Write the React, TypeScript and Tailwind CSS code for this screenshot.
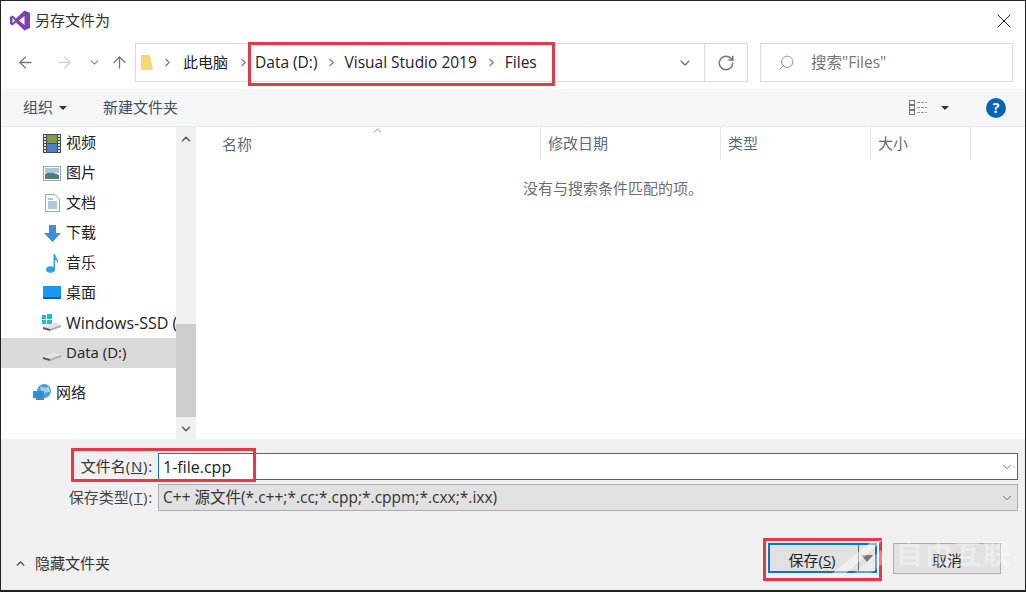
import React from 'react';
import { ArrowLeft, ArrowRight, ArrowUp, ChevronDown, ChevronRight, ChevronUp, RotateCw, X, Search } from 'lucide-react';

const FONT = "[font-family:'Open_Sans','Noto_Sans_CJK_SC',sans-serif]";

const VsLogo = () => (
  <svg width="20" height="21" viewBox="0 0 20 21">
    <path d="M14.5 0.5 L20 3 V18 L14.5 20.5 L6 12.5 L2.5 15.5 L0 14 V7 L2.5 5.5 L6 8.5 Z" fill="#7b3fb8" />
    <path d="M14.5 6 L9 10.5 L14.5 15 Z" fill="#fff" />
    <path d="M2.5 8 V13 L5 10.5 Z" fill="#fff" />
  </svg>
);

const FilmIcon = () => (
  <svg width="18" height="19" viewBox="0 0 18 19">
    <rect width="18" height="19" fill="#4a4a44" />
    <rect x="4" y="1" width="10" height="8" fill="#7f9a4a" />
    <rect x="4" y="10" width="10" height="8" fill="#4f7fd0" />
    {[1, 4, 7, 10, 13, 16].map(y => (
      <g key={y}>
        <rect x="1" y={y} width="2" height="2" fill="#ddd" />
        <rect x="15" y={y} width="2" height="2" fill="#ddd" />
      </g>
    ))}
  </svg>
);

const PictureIcon = () => (
  <svg width="18" height="15" viewBox="0 0 18 15">
    <rect x="0.5" y="0.5" width="17" height="14" fill="#fff" stroke="#9aa5ad" />
    <rect x="2" y="2" width="14" height="5" fill="#a9c6dc" />
    <path d="M2 8 Q8 5 16 9 V13 H2 Z" fill="#4f7f70" />
  </svg>
);

const DocIcon = () => (
  <svg width="15" height="18" viewBox="0 0 15 18">
    <path d="M0.5 0.5 H10 L14.5 5 V17.5 H0.5 Z" fill="#fff" stroke="#9aa5ad" />
    <path d="M3 5 H8 M3 8 H12 M3 10 H12 M3 12 H12 M3 14 H12" stroke="#5b8fc0" />
  </svg>
);

const DownloadIcon = () => (
  <svg width="17" height="17" viewBox="0 0 17 17">
    <path d="M5 0 H12 V8 H17 L8.5 17 L0 8 H5 Z" fill="#3e8ede" />
  </svg>
);

const MusicIcon = () => (
  <svg width="13" height="19" viewBox="0 0 13 19">
    <ellipse cx="4.5" cy="15.5" rx="4.5" ry="3.2" fill="#2ea3ea" />
    <path d="M7.5 15 V0 H9 C9.5 4 13 5 12 10 C11.5 7.5 10.5 6.5 9 6 V15 Z" fill="#2ea3ea" />
  </svg>
);

const DesktopIcon = () => (
  <svg width="18" height="14" viewBox="0 0 18 14">
    <rect width="18" height="12" fill="#1c97f0" />
    <rect y="11" width="18" height="2" fill="#0d5fa8" />
  </svg>
);

const DriveIcon = ({ win }: { win?: boolean }) => (
  <svg width="20" height="18" viewBox="0 0 20 18">
    {win && (
      <g fill="#22b8d8">
        <rect x="0" y="1" width="4" height="4" />
        <rect x="5" y="0" width="5" height="5" />
        <rect x="0" y="6" width="4" height="4" />
        <rect x="5" y="6" width="5" height="4" />
      </g>
    )}
    <path d="M1 13 L13 8 L19 11 L8 15 Z" fill="#e4e4e4" />
    <path d="M1 13 L8 15 V17 L1 15 Z" fill="#55585a" />
    <path d="M8 15 L19 11 V13 L8 17 Z" fill="#a9adb0" />
  </svg>
);

const NetworkIcon = () => (
  <svg width="19" height="18" viewBox="0 0 19 18">
    <circle cx="11" cy="7" r="7" fill="#4fa0cf" />
    <path d="M7 2 Q11 5 16 3 L17 8 Q12 8 9 11 Z" fill="#9fd2ea" />
    <rect x="0" y="7" width="11" height="7" fill="#2b8fdc" />
    <rect x="3" y="14" width="8" height="2" fill="#6d7d8a" />
  </svg>
);

const NavItem = ({ icon, label, indent = 'pl-[41px]', size = 'text-[15px]', active }: { icon: React.ReactNode; label: string; indent?: string; size?: string; active?: boolean }) => (
  <div className={`h-[30px] flex items-center shrink-0 whitespace-nowrap overflow-hidden ${indent} ${active ? 'bg-[#d9d9d9]' : ''}`}>
    <div className="w-[20px] flex justify-center shrink-0">{icon}</div>
    <span className={`ml-[4px] mb-[1px] text-[#222] ${size}`}>{label}</span>
  </div>
);

const Column = ({ label, width }: { label: string; width: string }) => (
  <div className={`h-[33px] flex items-center pl-[7px] border-r border-[#e5e5e5] text-[15px] text-[#5a6b7c] ${width}`}>
    {label}
  </div>
);

const RedBox = ({ className }: { className: string }) => (
  <div className={`absolute border-[3px] border-[#e53945] pointer-events-none ${className}`} />
);

export default function App() {
  return (
    <div className={`relative w-[1026px] h-[592px] overflow-hidden bg-white flex flex-col border-x border-t border-b-2 border-[#222] ${FONT}`}>
      {/* title bar */}
      <div className="h-[39px] shrink-0 flex items-center pl-[9px] pr-[9px]">
        <VsLogo />
        <span className="ml-[5px] text-[15px] text-[#333]">另存文件为</span>
        <X className="ml-auto text-[#222]" size={24} strokeWidth={1} />
      </div>

      {/* address row */}
      <div className="h-[49px] shrink-0 flex pt-[3px] pl-[15px] pr-[12px]">
        <div className="flex items-center h-[39px] text-[#777]">
          <ArrowLeft size={19} strokeWidth={1.6} />
          <ArrowRight size={19} strokeWidth={1.6} className="ml-[20px] text-[#d4d4d4]" />
          <ChevronDown size={13} strokeWidth={2} className="ml-[14px] text-[#888]" />
          <ArrowUp size={19} strokeWidth={1.6} className="ml-[9px]" />
        </div>
        <div className="ml-[6px] w-[613px] h-[39px] flex items-center border border-[#d9d9d9]">
          <svg width="12" height="17" viewBox="0 0 12 17" className="ml-[5px]">
            <path d="M0 1 H9 L12 16 H0 Z" fill="#f7d774" />
          </svg>
          <ChevronRight size={13} strokeWidth={2} className="ml-[8px] text-[#777]" />
          <span className="ml-[9px] text-[15px] text-[#222]">此电脑</span>
          <ChevronRight size={13} strokeWidth={2} className="ml-[9px] text-[#777]" />
          <span className="ml-[5px] text-[15.5px] text-[#222]">Data (D:)</span>
          <ChevronRight size={13} strokeWidth={2} className="ml-[7px] text-[#777]" />
          <span className="ml-[7px] text-[15.5px] text-[#222]">Visual Studio 2019</span>
          <ChevronRight size={13} strokeWidth={2} className="ml-[8px] text-[#777]" />
          <span className="ml-[7px] text-[15.5px] text-[#222]">Files</span>
          <ChevronDown size={16} strokeWidth={1.6} className="ml-auto mr-[11px] text-[#666]" />
          <div className="w-[43px] h-full border-l border-[#d9d9d9] flex items-center justify-center">
            <RotateCw size={18} strokeWidth={2} className="text-[#777]" />
          </div>
        </div>
        <div className="ml-[12px] flex-1 h-[39px] flex items-center border border-[#d9d9d9] pl-[17px] text-[15.5px] text-[#777]">
          <Search size={17} strokeWidth={1.1} className="-scale-x-100 text-[#777]" />
          <span className="ml-[16px]">搜索"Files"</span>
        </div>
      </div>

      {/* toolbar */}
      <div className="h-[38px] shrink-0 bg-[#f5f6f7] flex items-center pl-[22px] pr-[19px] text-[15px] text-[#3f4f60] border-b border-[#e8e8e8]">
        <span>组织</span>
        <span className="ml-[6px] w-0 h-0 border-x-[4px] border-x-transparent border-t-[4px] border-t-[#333]" />
        <span className="ml-[36px]">新建文件夹</span>
        <svg width="18" height="16" viewBox="0 0 18 16" className="ml-auto">
          <rect x="0.5" y="0.5" width="5" height="4" fill="none" stroke="#777" />
          <rect x="0.5" y="5.5" width="5" height="4" fill="none" stroke="#777" />
          <rect x="0.5" y="10.5" width="5" height="4" fill="none" stroke="#777" />
          <path d="M8 2.5 H18 M8 7.5 H18 M8 12.5 H18" stroke="#999" strokeDasharray="3 1" />
        </svg>
        <span className="ml-[14px] w-0 h-0 border-x-[4px] border-x-transparent border-t-[4px] border-t-[#333]" />
        <div className="ml-[37px] w-[20px] h-[20px] rounded-full bg-[#0b63b5] text-white font-bold text-[14px] flex items-center justify-center">?</div>
      </div>

      {/* body */}
      <div className="h-[312px] shrink-0 flex">
        <div className="w-[175px] shrink-0 flex flex-col pt-[1px]">
          <NavItem icon={<FilmIcon />} label="视频" />
          <NavItem icon={<PictureIcon />} label="图片" />
          <NavItem icon={<DocIcon />} label="文档" />
          <NavItem icon={<DownloadIcon />} label="下载" />
          <NavItem icon={<MusicIcon />} label="音乐" />
          <NavItem icon={<DesktopIcon />} label="桌面" />
          <NavItem icon={<DriveIcon win />} label="Windows-SSD (" size="text-[16px]" />
          <NavItem icon={<DriveIcon />} label="Data (D:)" active />
          <div className="h-[10px] shrink-0" />
          <NavItem icon={<NetworkIcon />} label="网络" indent="pl-[31px]" />
        </div>
        <div className="w-[20px] shrink-0 bg-[#f0f0f0] flex flex-col items-center">
          <ChevronUp size={14} strokeWidth={2.4} className="mt-[5px] text-[#555]" />
          <div className="mt-[178px] w-full h-[93px] bg-[#cdcdcd]" />
          <ChevronDown size={14} strokeWidth={2.4} className="mt-[5px] text-[#555]" />
        </div>
        <div className="flex-1 relative">
          <div className="flex">
            <Column label="" width="w-[345px]" />
            <Column label="修改日期" width="w-[180px]" />
            <Column label="类型" width="w-[150px]" />
            <Column label="大小" width="w-[100px]" />
          </div>
          <span className="absolute left-[26px] top-[6px] text-[15px] text-[#5a6b7c]">名称</span>
          <ChevronUp size={13} strokeWidth={1.2} className="absolute left-[175px] top-[-3px] text-[#555]" />
          <div className="pl-[327px] pt-[17px] text-[15px] text-[#6d6d6d]">没有与搜索条件匹配的项。</div>
        </div>
      </div>

      {/* footer */}
      <div className="flex-1 bg-[#f0f0f0] flex flex-col">
        <div className="flex items-center mt-[14px] h-[27px]">
          <div className="w-[157px] text-right pr-[5px] text-[15px] text-[#333]">文件名<span className="tracking-[0.8px]">(<span className="underline">N</span>):</span></div>
          <div className="w-[860px] h-[27px] bg-white border border-[#1a73b8] flex items-center pl-[4px] text-[16px] text-[#222]">
            1-file.cpp
            <ChevronDown size={14} strokeWidth={1.4} className="ml-auto mr-[3px] text-[#555]" />
          </div>
        </div>
        <div className="flex items-center mt-[4px] h-[27px]">
          <div className="w-[157px] text-right pr-[5px] text-[15px] text-[#444]">保存类型<span className="tracking-[0.8px]">(<span className="underline">T</span>):</span></div>
          <div className="w-[860px] h-[27px] bg-[#e1e1e1] border border-[#adadad] flex items-center pl-[4px] text-[15.5px] text-[#333]">
            C++ 源文件(*.c++;*.cc;*.cpp;*.cppm;*.cxx;*.ixx)
            <ChevronDown size={14} strokeWidth={1.4} className="ml-auto mr-[3px] text-[#555]" />
          </div>
        </div>
        <div className="flex items-center mt-[31px] pl-[13px] pr-[24px]">
          <ChevronUp size={13} strokeWidth={2.6} className="mt-[10px] text-[#444]" />
          <span className="ml-[8px] mt-[10px] text-[15px] text-[#333]">隐藏文件夹</span>
          <div className="ml-auto w-[109px] h-[30px] bg-[#e1e1e1] border-2 border-[#0e74c4] flex items-center text-[15px] text-[#222]">
            <span className="w-[88px] text-center pr-[4px] pt-[3px]">保存(<span className="underline">S</span>)</span>
            <div className="w-px h-full bg-[#666]" />
            <span className="ml-[2px] w-0 h-0 border-x-[6px] border-x-transparent border-t-[7px] border-t-[#777]" />
          </div>
          <div className="ml-[16px] w-[108px] h-[31px] bg-[#e1e1e1] border border-[#adadad] flex items-center justify-center pt-[3px] text-[15px] text-[#222]">取消</div>
        </div>
      </div>

      {/* annotation boxes */}
      <RedBox className="left-[247px] top-[41px] w-[307px] h-[44px]" />
      <RedBox className="left-[70px] top-[447px] w-[185px] h-[34px]" />
      <RedBox className="left-[762px] top-[537px] w-[119px] h-[43px]" />

      {/* watermark */}
      <svg width="60" height="40" viewBox="0 0 60 40" className="absolute left-[826px] top-[537px] pointer-events-none">
        <path d="M2 38 L44 4 L56 2 L16 38 Z" fill="#fff" fillOpacity="0.5" />
        <path d="M24 38 L54 12 L58 24 L40 38 Z" fill="#fff" fillOpacity="0.35" />
      </svg>
      <span className="absolute left-[895px] top-[533px] text-[27px] tracking-[2px] text-white/40 font-bold pointer-events-none">自由互联</span>
    </div>
  );
}
